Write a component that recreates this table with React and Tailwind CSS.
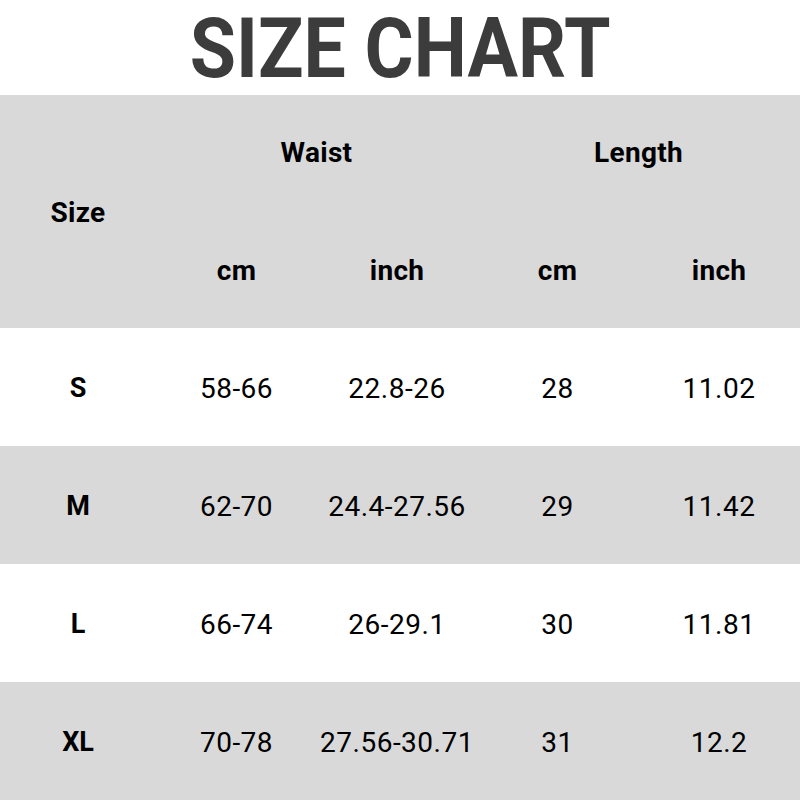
const ROWS = [
  { size: 'S', waistCm: '58-66', waistIn: '22.8-26', lenCm: '28', lenIn: '11.02' },
  { size: 'M', waistCm: '62-70', waistIn: '24.4-27.56', lenCm: '29', lenIn: '11.42' },
  { size: 'L', waistCm: '66-74', waistIn: '26-29.1', lenCm: '30', lenIn: '11.81' },
  { size: 'XL', waistCm: '70-78', waistIn: '27.56-30.71', lenCm: '31', lenIn: '12.2' },
]

// column widths tuned to the chart's centres
const COLS = 'grid-cols-[156px_161px_160px_161px_162px]'

export default function App() {
  return (
    <div className="w-[800px] h-[800px] bg-white text-black font-['Roboto',sans-serif] overflow-hidden">
      {/* title — glyphs are a touch condensed in the original */}
      <div className="h-[95px] flex items-center justify-center">
        <h1 className="text-[84px] font-bold leading-none text-[#3c3c3c] scale-x-[0.895] mt-[2px] whitespace-nowrap">SIZE CHART</h1>
      </div>

      {/* header band */}
      <div className={`h-[233px] bg-[#d9d9d9] grid ${COLS} grid-rows-2 text-[28px] font-bold tracking-[0.3px]`}>
        <div className="row-span-2 flex items-center justify-center pt-[2px]">Size</div>
        <div className="col-span-2 flex items-center justify-center">Waist</div>
        <div className="col-span-2 flex items-center justify-center">Length</div>
        <div className="flex items-center justify-center pt-[3px]">cm</div>
        <div className="flex items-center justify-center pt-[3px]">inch</div>
        <div className="flex items-center justify-center pt-[3px]">cm</div>
        <div className="flex items-center justify-center pt-[3px]">inch</div>
      </div>

      {ROWS.map((r, i) => (
        <div
          key={r.size}
          className={`h-[118px] grid ${COLS} pt-[3px] text-[28px] tracking-[0.5px] ${i % 2 ? 'bg-[#d9d9d9]' : 'bg-white'}`}
        >
          <div className="flex items-center justify-center font-bold text-[27px] tracking-normal">{r.size}</div>
          <div className="flex items-center justify-center">{r.waistCm}</div>
          <div className="flex items-center justify-center">{r.waistIn}</div>
          <div className="flex items-center justify-center">{r.lenCm}</div>
          <div className="flex items-center justify-center">{r.lenIn}</div>
        </div>
      ))}
    </div>
  )
}
